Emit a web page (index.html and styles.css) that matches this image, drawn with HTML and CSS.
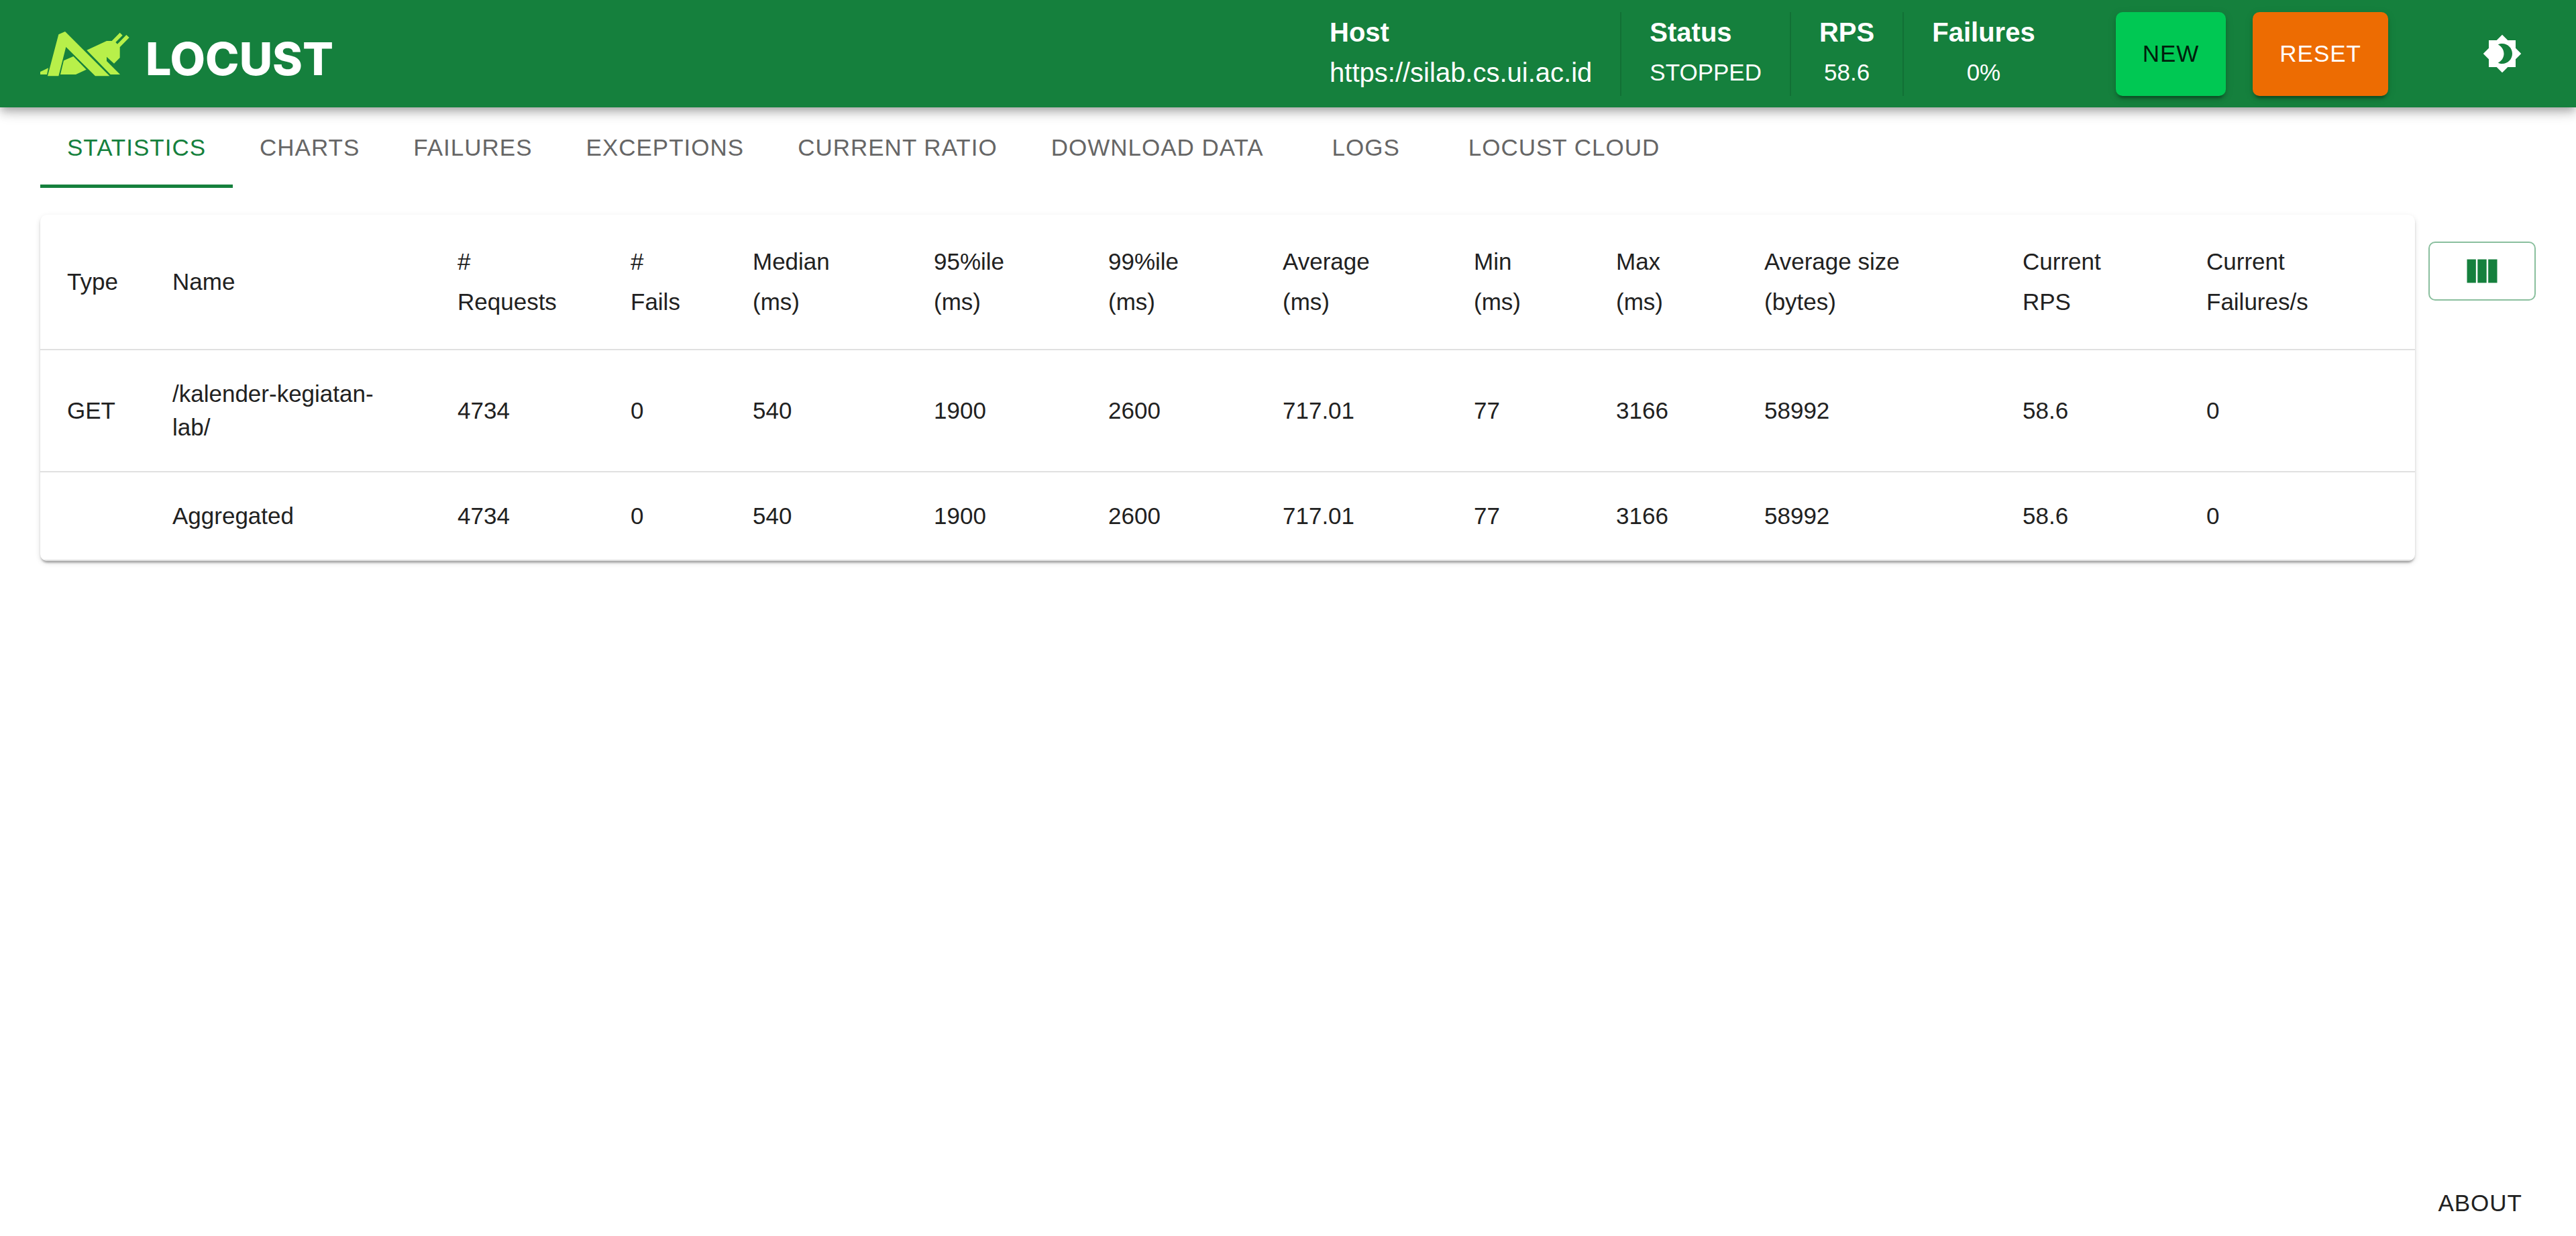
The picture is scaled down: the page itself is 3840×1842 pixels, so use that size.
FILE: index.html
```html
<!DOCTYPE html>
<html lang="en">
<head>
<meta charset="utf-8">
<title>Locust</title>
<meta name="viewport" content="width=device-width, initial-scale=1">
<link rel="stylesheet" href="styles.css">
</head>
<body>
<header class="appbar">
  <a class="brand" href="#">
    <svg class="brand-mark" viewBox="60 80 399 201" aria-hidden="true">
      <path d="M60 260 96 243 90 272H60Z"/>
      <path d="M142 93 171 80 370 279H306L175 149 142 279H93Z"/>
      <path d="M165 210 208 191 266 250 219 272H150Z"/>
      <path d="M268 163 357 122H380L416 85 428 97 397 128 405 136 445 95 458 107 416 150V197L390 223 357 193V212L417 272H374Z"/>
    </svg>
    <span class="brand-name">LOCUST</span>
  </a>
  <div class="stats">
    <div class="stat"><b>Host</b><span class="host">https://silab.cs.ui.ac.id</span></div>
    <div class="stat"><b>Status</b><span>STOPPED</span></div>
    <div class="stat centered"><b>RPS</b><span>58.6</span></div>
    <div class="stat centered"><b>Failures</b><span>0%</span></div>
  </div>
  <div class="actions">
    <button class="btn btn-new" type="button">NEW</button>
    <button class="btn btn-reset" type="button">RESET</button>
  </div>
  <button class="icon-btn" type="button" aria-label="Toggle theme">
    <svg class="icon" viewBox="0 0 24 24"><path d="M20 8.69V4h-4.69L12 .69 8.69 4H4v4.69L.69 12 4 15.31V20h4.69L12 23.31 15.31 20H20v-4.69L23.31 12zM12 18c-.89 0-1.74-.2-2.5-.55C11.56 16.5 13 14.42 13 12s-1.44-4.5-3.5-5.45C10.26 6.2 11.11 6 12 6c3.31 0 6 2.69 6 6s-2.69 6-6 6"/></svg>
  </button>
</header>

<nav class="tabs">
  <a class="tab active" href="#statistics">STATISTICS</a>
  <a class="tab" href="#charts">CHARTS</a>
  <a class="tab" href="#failures">FAILURES</a>
  <a class="tab" href="#exceptions">EXCEPTIONS</a>
  <a class="tab" href="#ratio">CURRENT RATIO</a>
  <a class="tab" href="#download">DOWNLOAD DATA</a>
  <a class="tab" href="#logs">LOGS</a>
  <a class="tab" href="#cloud">LOCUST CLOUD</a>
</nav>

<main class="panel">
  <div class="paper">
    <table class="table">
      <colgroup>
        <col class="c-type"><col class="c-name"><col class="c-requests"><col class="c-fails"><col class="c-median"><col class="c-pct"><col class="c-pct"><col class="c-average"><col class="c-min"><col class="c-max"><col class="c-size"><col class="c-rps"><col class="c-failrate">
      </colgroup>
      <thead>
        <tr><th>Type</th><th>Name</th><th>#<br>Requests</th><th>#<br>Fails</th><th>Median (ms)</th><th>95%ile (ms)</th><th>99%ile (ms)</th><th>Average (ms)</th><th>Min (ms)</th><th>Max (ms)</th><th>Average size (bytes)</th><th>Current RPS</th><th>Current Failures/s</th></tr>
      </thead>
      <tbody>
        <tr><td>GET</td><td>/kalender-kegiatan-lab/</td><td>4734</td><td>0</td><td>540</td><td>1900</td><td>2600</td><td>717.01</td><td>77</td><td>3166</td><td>58992</td><td>58.6</td><td>0</td></tr>
        <tr><td></td><td>Aggregated</td><td>4734</td><td>0</td><td>540</td><td>1900</td><td>2600</td><td>717.01</td><td>77</td><td>3166</td><td>58992</td><td>58.6</td><td>0</td></tr>
      </tbody>
    </table>
  </div>
  <button class="columns-btn" type="button" aria-label="Select columns">
    <svg class="icon" viewBox="0 0 24 24"><path d="M14.67 5v14H9.33V5zm1 14H21V5h-5.33zm-7.34 0V5H3v14z"/></svg>
  </button>
</main>

<footer class="footer">
  <button class="about" type="button">ABOUT</button>
</footer>
</body>
</html>
```
FILE: styles.css
```css
* { box-sizing: border-box; }

body {
  margin: 0;
  min-height: 100vh;
  display: flex;
  flex-direction: column;
  background: #fff;
  color: #212121;
  font: 35px/50px "Liberation Sans", Arial, sans-serif;
}

button {
  border: 0;
  background: none;
  font: inherit;
  color: inherit;
  cursor: pointer;
}

a { color: inherit; text-decoration: none; }

.icon {
  display: block;
  width: 60px;
  height: 60px;
  fill: currentColor;
}

/* App bar */
.appbar {
  display: flex;
  align-items: center;
  min-height: 160px;
  padding: 0 60px;
  background: #15803d;
  color: #fff;
  box-shadow: 0 5px 10px -3px rgba(0, 0, 0, .2), 0 10px 13px rgba(0, 0, 0, .14), 0 3px 25px rgba(0, 0, 0, .12);
}

.brand {
  display: flex;
  align-items: flex-end;
  gap: 24px;
  margin-right: auto;
}

.brand-mark {
  width: 133px;
  height: 67px;
  fill: #b8f04a;
}

.brand-name {
  font: 800 68px/54px Inter, "Liberation Sans", sans-serif;
}

.stats { display: flex; }

.stat {
  display: flex;
  flex-direction: column;
  height: 125px;
  padding: 0 42px;
  line-height: 60px;
}

.stat + .stat { border-left: 2px solid rgba(0, 0, 0, .12); }
.stat b, .host { font-size: 40px; }
.centered { align-items: center; }

.actions {
  display: flex;
  gap: 40px;
  margin: 0 120px 0 78px;
}

.btn {
  height: 125px;
  padding: 0 40px;
  border-radius: 10px;
  letter-spacing: 1px;
  box-shadow: 0 8px 3px -5px rgba(0, 0, 0, .2), 0 5px 5px rgba(0, 0, 0, .14), 0 3px 13px rgba(0, 0, 0, .12);
}

.btn-new { background: #00c853; color: rgba(0, 0, 0, .87); }
.btn-reset { background: #ed6c02; color: #fff; }
.icon-btn { padding: 20px; }

/* Tabs */
.tabs {
  display: flex;
  padding: 0 60px;
  letter-spacing: 1px;
}

.tab {
  min-width: 225px;
  padding: 35px 40px 30px;
  border-bottom: 5px solid transparent;
  color: #666;
  text-align: center;
  white-space: nowrap;
}

.tab.active { border-color: #15803d; color: #15803d; }

/* Statistics */
.panel {
  display: flex;
  align-items: flex-start;
  gap: 20px;
  padding: 40px 60px;
}

.paper {
  flex: 1;
  border-radius: 10px;
  overflow: hidden;
  box-shadow: 0 5px 3px -3px rgba(0, 0, 0, .2), 0 3px 3px rgba(0, 0, 0, .14), 0 3px 8px rgba(0, 0, 0, .12);
}

.table {
  width: 100%;
  table-layout: fixed;
  border-collapse: separate;
  border-spacing: 0;
}

.table th, .table td {
  padding: 40px;
  border-bottom: 2px solid #e0e0e0;
  text-align: left;
  font-weight: 400;
}

.table th { line-height: 60px; }

.c-type { width: 157px; }
.c-name { width: 425px; }
.c-requests { width: 258px; }
.c-fails { width: 182px; }
.c-median { width: 270px; }
.c-pct { width: 260px; }
.c-average { width: 285px; }
.c-min { width: 212px; }
.c-max { width: 221px; }
.c-size { width: 385px; }
.c-rps { width: 274px; }
.c-failrate { width: 351px; }

.columns-btn {
  display: flex;
  justify-content: center;
  width: 160px;
  margin-top: 40px;
  padding: 12px;
  border: 2px solid rgba(21, 128, 61, .5);
  border-radius: 10px;
  color: #15803d;
}

.footer {
  display: flex;
  justify-content: flex-end;
  margin-top: auto;
  padding: 0 60px 4px;
}

.about {
  padding: 15px 20px;
  line-height: 60px;
  letter-spacing: 1px;
}
```
